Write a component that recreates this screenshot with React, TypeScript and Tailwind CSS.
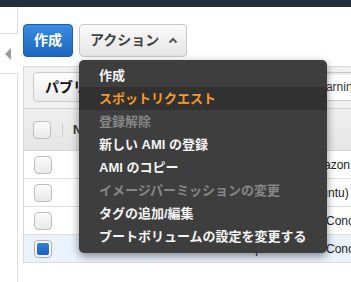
import React from "react";

type MenuItem = { label: string; state?: "active" | "disabled" };

const menuItems: MenuItem[] = [
  { label: "作成" },
  { label: "スポットリクエスト", state: "active" },
  { label: "登録解除", state: "disabled" },
  { label: "新しい AMI の登録" },
  { label: "AMI のコピー" },
  { label: "イメージパーミッションの変更", state: "disabled" },
  { label: "タグの追加/編集" },
  { label: "ブートボリュームの設定を変更する" },
];

// Name tags are empty on these images; the AMI name sits in the next column
const rows = [
  { ami: "amzn-ami-hvm-2017.09", desc: "Amazon Linux AMI", selected: false },
  { ami: "ubuntu-xenial-16.04", desc: "Ubuntu)", selected: false },
  { ami: "concourse-worker", desc: "EC Concourse", selected: false },
  { ami: "concourse-web-prod", desc: "EC Concourse", selected: true },
];

function Checkbox({ checked }: { checked?: boolean }) {
  if (checked) {
    return (
      <div className="flex h-[18px] w-[18px] items-center justify-center rounded-[4px] border border-[#b0b0b0] bg-[#f4f4f4]">
        <div className="h-[12px] w-[12px] rounded-[2px] bg-linear-to-b from-[#2f7fdc] to-[#1b62c0]" />
      </div>
    );
  }
  return (
    <div className="h-[18px] w-[18px] rounded-[4px] border border-[#bdbdbd] bg-linear-to-b from-[#fbfbfb] to-[#e9e9e9]" />
  );
}

function ActionMenu() {
  return (
    <div className="absolute top-[36px] left-0 z-10 w-[248px] rounded-[5px] bg-[#3e3e3e] pt-[4px] pb-[5px] shadow-[0_3px_8px_rgba(0,0,0,0.45)]">
      {menuItems.map((item) => (
        <div
          key={item.label}
          className={`flex h-[23px] items-center pl-[20px] text-[13px] font-bold whitespace-nowrap ${
            item.state === "active"
              ? "bg-[#313131] text-[#f59b26]"
              : item.state === "disabled"
                ? "text-[#878787]"
                : "text-[#f4f4f4]"
          }`}
        >
          {item.label}
        </div>
      ))}
    </div>
  );
}

export default function App() {
  return (
    <div className="relative h-[282px] w-[351px] overflow-hidden bg-white font-['Liberation_Sans','Noto_Sans_CJK_JP',sans-serif]">
      {/* Top nav strip */}
      <div className="h-[7px] bg-[#232f3e]" />

      <div className="flex h-[275px]">
        {/* Collapsed sidebar */}
        <div className="flex w-[18px] shrink-0 flex-col">
          <div className="h-[27px] border-r border-b border-[#dcdcdc]" />
          <div className="flex h-[39px] items-center pl-[5px]">
            <div className="h-0 w-0 border-y-[6px] border-r-[6px] border-y-transparent border-r-[#9a9a9a]" />
          </div>
          <div className="flex-1 border-t border-r border-[#dcdcdc]" />
        </div>

        {/* Main */}
        <div className="ml-[5px] flex-1">
          <div className="flex gap-[6px] pt-[17px]">
            <button
              type="button"
              className="flex h-[33px] w-[50px] items-center justify-center rounded-[4px] border border-[#1b5fb3] bg-linear-to-b from-[#3a8de0] to-[#1d66c1] text-[14px] font-bold text-white"
            >
              作成
            </button>
            <div className="relative">
              <button
                type="button"
                className="flex h-[33px] w-[108px] items-center gap-[9px] rounded-[4px] border border-[#c8c8c8] bg-linear-to-b from-[#fafafa] to-[#e5e5e5] pl-[10px] text-[14px] font-bold text-[#444444]"
              >
                アクション
                <svg width="10" height="7" viewBox="0 0 10 7" fill="none">
                  <polyline points="1.5,5.5 5,2 8.5,5.5" stroke="#555555" strokeWidth="2" />
                </svg>
              </button>
              <ActionMenu />
            </div>
          </div>

          {/* Images panel */}
          <div className="mt-[9px] w-[420px] border-t border-l border-[#d9d9d9] text-[12px] text-[#222222]">
            <div className="flex h-[42px] items-start border-b border-[#d2d2d2] bg-[#f1f1f1] pt-[5px] pr-[10px] pl-[9px]">
              <button
                type="button"
                className="flex h-[30px] w-[150px] items-center rounded-[4px] border border-[#cbcbcb] bg-linear-to-b from-[#fdfdfd] to-[#ececec] pl-[11px] text-[14px] font-bold text-[#111111]"
              >
                パブリックイメージ
              </button>
              <div className="ml-auto flex h-[29px] w-[134px] items-center border border-[#c9c9c9] bg-white pl-[15px] text-[12px] text-[#333333] shadow-[inset_0_2px_1px_rgba(0,0,0,0.08)]">
                Warning
              </div>
            </div>

            <div className="flex h-[42px] items-center border-b border-[#d6d6d6] bg-linear-to-b from-[#efefef] to-[#e6e6e6]">
              <div className="w-[38px] pl-[9px]">
                <Checkbox />
              </div>
              <div className="h-[14px] border-l border-[#cfcfcf]" />
              <div className="pl-[10px] text-[12px] font-bold text-[#333333]">Name</div>
            </div>

            {rows.map((row) => (
              <div
                key={row.ami}
                className={`flex h-[28px] items-center border-b border-[#dddddd] ${
                  row.selected ? "bg-[#eaf2fd]" : "bg-white"
                }`}
              >
                <div className="w-[38px] shrink-0 pl-[10px]">
                  <Checkbox checked={row.selected} />
                </div>
                <div className="w-[100px] shrink-0" />
                <div className="w-[144px] shrink-0 truncate pl-[8px]">{row.ami}</div>
                <div className="whitespace-nowrap">{row.desc}</div>
              </div>
            ))}
          </div>
        </div>
      </div>
    </div>
  );
}
